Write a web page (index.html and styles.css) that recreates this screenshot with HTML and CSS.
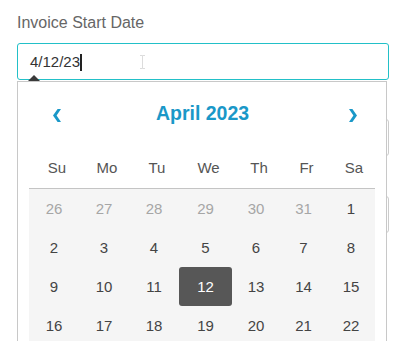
FILE: index.html
```html
<!DOCTYPE html>
<html lang="en">
<head>
<meta charset="utf-8">
<title>Invoice Start Date</title>
<link rel="stylesheet" href="styles.css">
</head>
<body>
<div class="form">
  <div class="field field-open">
    <div class="label">Invoice Start Date</div>
    <div class="input input-focus">
      <span class="value">4/12/23</span><span class="caret"></span>
      <svg class="ibeam" width="7" height="14" viewBox="0 0 7 14"><path d="M1 0.5h2.5M3.5 0.5h2.5M3.5 0.5v13M1 13.5h2.5M3.5 13.5h2.5" stroke="#dcdcdc" stroke-width="1" fill="none"/></svg>
    </div>
    <div class="picker">
      <div class="nav">
        <svg class="chev" width="8" height="13" viewBox="0 0 8 13"><polygon points="8,0 3.6,6.5 8,13 4.6,13 0,6.5 4.6,0" fill="#1a98c8"/></svg>
        <div class="month">April 2023</div>
        <svg class="chev" width="8" height="13" viewBox="0 0 8 13"><polygon points="0,0 4.4,6.5 0,13 3.4,13 8,6.5 3.4,0" fill="#1a98c8"/></svg>
      </div>
      <div class="grid head">
        <div>Su</div><div>Mo</div><div>Tu</div><div>We</div><div>Th</div><div>Fr</div><div>Sa</div>
      </div>
      <div class="grid days">
        <div class="other">26</div><div class="other">27</div><div class="other">28</div><div class="other">29</div><div class="other">30</div><div class="other">31</div><div>1</div>
        <div>2</div><div>3</div><div>4</div><div>5</div><div>6</div><div>7</div><div>8</div>
        <div>9</div><div>10</div><div>11</div><div class="selected">12</div><div>13</div><div>14</div><div>15</div>
        <div>16</div><div>17</div><div>18</div><div>19</div><div>20</div><div>21</div><div>22</div>
      </div>
    </div>
  </div>
  <div class="field field-2">
    <div class="input"></div>
  </div>
  <div class="field field-3">
    <div class="input"></div>
  </div>
</div>
</body>
</html>
```
FILE: styles.css
```css
html, body {
  margin: 0;
  padding: 0;
  background: #ffffff;
  height: 341px;
  overflow: hidden;
}
body {
  font-family: "Liberation Sans", Arial, sans-serif;
  color: #444444;
}
.form {
  box-sizing: border-box;
  height: 341px;
  padding: 13px 15px 0 17px;
  width: 404px;
}
.field {
  position: relative;
}
.field-2 {
  margin-top: 39px;
}
.field-3 {
  margin-top: 40px;
}
.label {
  font-size: 16px;
  line-height: 20px;
  color: #666666;
  margin-bottom: 10px;
}
.input {
  position: relative;
  box-sizing: border-box;
  height: 37px;
  border: 1px solid #cccccc;
  border-radius: 3px;
  padding-left: 12px;
  font-size: 15px;
  line-height: 35px;
  color: #333333;
}
.input-focus {
  border-color: #22c0c8;
}
.caret {
  display: inline-block;
  width: 1.5px;
  height: 17px;
  background: #222222;
  vertical-align: -4px;
}
.ibeam {
  position: absolute;
  left: 121px;
  top: 11px;
}
.picker {
  position: absolute;
  z-index: 10;
  left: 0;
  top: 100%;
  margin-top: 1px;
  box-sizing: border-box;
  width: 370px;
  height: 262px;
  background: #ffffff;
  border: 1px solid #c8c8c8;
  border-bottom: none;
  padding: 16px 11px 0 11px;
}
.picker::before {
  content: "";
  position: absolute;
  left: 10px;
  top: -7px;
  width: 0;
  height: 0;
  border-left: 6.5px solid transparent;
  border-right: 6.5px solid transparent;
  border-bottom: 6px solid #3a3a3a;
}
.nav {
  display: flex;
  align-items: center;
  justify-content: space-between;
  height: 30px;
  padding: 0 18px 0 24px;
  margin-bottom: 20px;
}
.chev {
  display: block;
  margin-top: 5px;
}
.month {
  font-size: 19.5px;
  font-weight: bold;
  line-height: 30px;
  color: #1a98c8;
  margin-right: 5px;
}
.grid {
  display: grid;
  grid-template-columns: 50px 50px 50px 53px 48px 47px 48px;
  width: 346px;
  font-size: 15px;
  text-align: center;
}
.head > div {
  line-height: 40px;
  height: 40px;
  color: #555555;
  padding-left: 6px;
}
.days {
  border-top: 1px solid #c4c4c4;
  background: #f5f5f5;
}
.days > div {
  line-height: 39px;
  height: 39px;
  color: #444444;
}
.days > .other {
  color: #a6a6a6;
}
.days > .selected {
  background: #575757;
  color: #ffffff;
  border-radius: 3px;
}
```
